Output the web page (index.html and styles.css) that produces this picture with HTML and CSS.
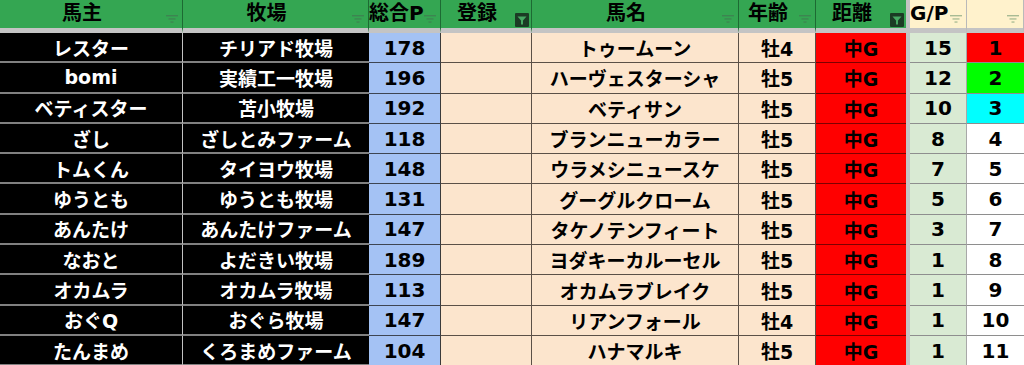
FILE: index.html
```html
<!DOCTYPE html>
<html lang="ja">
<head>
<meta charset="utf-8">
<title>sheet</title>
<link rel="stylesheet" href="styles.css">
</head>
<body>
<div class="sheet">
  <div class="row head">
    <div class="h g">馬主<svg class="fi" viewBox="0 0 12 9"><rect x="0" y="0" width="12" height="1.4"/><rect x="2.5" y="3.3" width="7" height="1.3"/><rect x="4.5" y="6.4" width="3" height="1.3"/></svg></div>
    <div class="h g">牧場<svg class="fi" viewBox="0 0 12 9"><rect x="0" y="0" width="12" height="1.4"/><rect x="2.5" y="3.3" width="7" height="1.3"/><rect x="4.5" y="6.4" width="3" height="1.3"/></svg></div>
    <div class="h g">総合P<svg class="fi" viewBox="0 0 12 9"><rect x="0" y="0" width="12" height="1.4"/><rect x="2.5" y="3.3" width="7" height="1.3"/><rect x="4.5" y="6.4" width="3" height="1.3"/></svg></div>
    <div class="h g">登録<svg class="fa" viewBox="0 0 14 14"><rect x="0" y="0" width="14" height="14" rx="1"/><polygon points="2.5,3.5 11.5,3.5 8,7.5 8,11.5 6,11.5 6,7.5"/></svg></div>
    <div class="h g">馬名<svg class="fi" viewBox="0 0 12 9"><rect x="0" y="0" width="12" height="1.4"/><rect x="2.5" y="3.3" width="7" height="1.3"/><rect x="4.5" y="6.4" width="3" height="1.3"/></svg></div>
    <div class="h g">年齢<svg class="fi" viewBox="0 0 12 9"><rect x="0" y="0" width="12" height="1.4"/><rect x="2.5" y="3.3" width="7" height="1.3"/><rect x="4.5" y="6.4" width="3" height="1.3"/></svg></div>
    <div class="h g last">距離<svg class="fa" viewBox="0 0 14 14"><rect x="0" y="0" width="14" height="14" rx="1"/><polygon points="2.5,3.5 11.5,3.5 8,7.5 8,11.5 6,11.5 6,7.5"/></svg></div>
    <div class="gap"></div>
    <div class="h y">G/P<svg class="fi" viewBox="0 0 12 9"><rect x="0" y="0" width="12" height="1.4"/><rect x="2.5" y="3.3" width="7" height="1.3"/><rect x="4.5" y="6.4" width="3" height="1.3"/></svg></div>
    <div class="h y"><svg class="fi" viewBox="0 0 12 9"><rect x="0" y="0" width="12" height="1.4"/><rect x="2.5" y="3.3" width="7" height="1.3"/><rect x="4.5" y="6.4" width="3" height="1.3"/></svg></div>
  </div>

  <div class="row">
    <div class="c k k1">レスター</div><div class="c k">チリアド牧場</div><div class="c b num">178</div><div class="c p"></div><div class="c p">トゥームーン</div><div class="c p">牡4</div><div class="c r">中G</div><div class="gap"></div><div class="c gp num">15</div><div class="c rk red num">1</div>
  </div>
  <div class="row">
    <div class="c k k1">bomi</div><div class="c k">実績工一牧場</div><div class="c b num">196</div><div class="c p"></div><div class="c p">ハーヴェスターシャ</div><div class="c p">牡5</div><div class="c r">中G</div><div class="gap"></div><div class="c gp num">12</div><div class="c rk grn num">2</div>
  </div>
  <div class="row">
    <div class="c k k1">ベティスター</div><div class="c k">苫小牧場</div><div class="c b num">192</div><div class="c p"></div><div class="c p">ベティサン</div><div class="c p">牡5</div><div class="c r">中G</div><div class="gap"></div><div class="c gp num">10</div><div class="c rk cyn num">3</div>
  </div>
  <div class="row">
    <div class="c k k1">ざし</div><div class="c k">ざしとみファーム</div><div class="c b num">118</div><div class="c p"></div><div class="c p">ブランニューカラー</div><div class="c p">牡5</div><div class="c r">中G</div><div class="gap"></div><div class="c gp num">8</div><div class="c rk num">4</div>
  </div>
  <div class="row">
    <div class="c k k1">トムくん</div><div class="c k">タイヨウ牧場</div><div class="c b num">148</div><div class="c p"></div><div class="c p">ウラメシニュースケ</div><div class="c p">牡5</div><div class="c r">中G</div><div class="gap"></div><div class="c gp num">7</div><div class="c rk num">5</div>
  </div>
  <div class="row">
    <div class="c k k1">ゆうとも</div><div class="c k">ゆうとも牧場</div><div class="c b num">131</div><div class="c p"></div><div class="c p">グーグルクローム</div><div class="c p">牡5</div><div class="c r">中G</div><div class="gap"></div><div class="c gp num">5</div><div class="c rk num">6</div>
  </div>
  <div class="row">
    <div class="c k k1">あんたけ</div><div class="c k">あんたけファーム</div><div class="c b num">147</div><div class="c p"></div><div class="c p">タケノテンフィート</div><div class="c p">牡5</div><div class="c r">中G</div><div class="gap"></div><div class="c gp num">3</div><div class="c rk num">7</div>
  </div>
  <div class="row">
    <div class="c k k1">なおと</div><div class="c k">よだきい牧場</div><div class="c b num">189</div><div class="c p"></div><div class="c p">ヨダキーカルーセル</div><div class="c p">牡5</div><div class="c r">中G</div><div class="gap"></div><div class="c gp num">1</div><div class="c rk num">8</div>
  </div>
  <div class="row">
    <div class="c k k1">オカムラ</div><div class="c k">オカムラ牧場</div><div class="c b num">113</div><div class="c p"></div><div class="c p">オカムラブレイク</div><div class="c p">牡5</div><div class="c r">中G</div><div class="gap"></div><div class="c gp num">1</div><div class="c rk num">9</div>
  </div>
  <div class="row">
    <div class="c k k1">おぐQ</div><div class="c k">おぐら牧場</div><div class="c b num">147</div><div class="c p"></div><div class="c p">リアンフォール</div><div class="c p">牡4</div><div class="c r">中G</div><div class="gap"></div><div class="c gp num">1</div><div class="c rk num">10</div>
  </div>
  <div class="row">
    <div class="c k k1">たんまめ</div><div class="c k">くろまめファーム</div><div class="c b num">104</div><div class="c p"></div><div class="c p">ハナマルキ</div><div class="c p">牡5</div><div class="c r">中G</div><div class="gap"></div><div class="c gp num">1</div><div class="c rk num">11</div>
  </div>
</div>
</body>
</html>
```

FILE: styles.css
```css
* { box-sizing: border-box; }
html, body { margin: 0; padding: 0; background: #ffffff; }
body {
  font-family: "DejaVu Sans", "Noto Sans CJK JP", sans-serif;
  font-weight: bold;
  color: #000;
  overflow: hidden;
}
.sheet { width: 1024px; }
.row {
  display: grid;
  grid-template-columns: 183px 186px 72px 91px 207px 77px 90px 4px 57px 57px;
  height: 30.3px;
}
.row.head { height: 33px; }

.h {
  position: relative;
  font-size: 20px;
  line-height: 27px;
  text-align: center;
  padding-right: 18px;
  white-space: nowrap;
  border-bottom: 5px solid #c4c4c4;
}
.h.g { background: #34a652; border-right: 1px solid #1d6a33; }
.h.g.last { border-right: none; }
.h.y { background: #fff2cc; border-right: 1px solid #b9b9b9; }

.fi {
  position: absolute;
  right: 4px;
  top: 15px;
  width: 12px;
  height: 9px;
  fill: rgba(70, 105, 80, 0.55);
}
.h.y .fi { fill: rgba(110, 150, 110, 0.6); }
.fa {
  position: absolute;
  right: 2px;
  top: 13px;
  width: 14px;
  height: 14px;
}
.fa rect { fill: #1b3b24; }
.fa polygon { fill: #46a862; }

.gap { background: #c4c4c4; }

.c {
  display: flex;
  align-items: center;
  justify-content: center;
  font-size: 19px;
  white-space: nowrap;
  overflow: visible;
}
.num { font-size: 20px; }

.k { background: #000; color: #fff; border-bottom: 2px solid #808080; }
.k1 { border-right: 1px solid #c2c2c2; }
.b { background: #a4c2f4; border-bottom: 1px solid #3e4552; border-right: 1px solid #3a3a3a; }
.p { background: #fce5cd; border-bottom: 1px solid #5b5047; border-right: 1px solid #5b5047; }
.r { background: #ff0000; border-bottom: 1px solid #7d0000; }
.gp { background: #d9ead3; border-bottom: 1px solid #8e8e8e; border-right: 1px solid #a8a8a8; }
.rk { background: #ffffff; border-bottom: 1px solid #8e8e8e; }
.rk.red { background: #ff0000; }
.rk.grn { background: #00ff00; }
.rk.cyn { background: #00ffff; }
```
